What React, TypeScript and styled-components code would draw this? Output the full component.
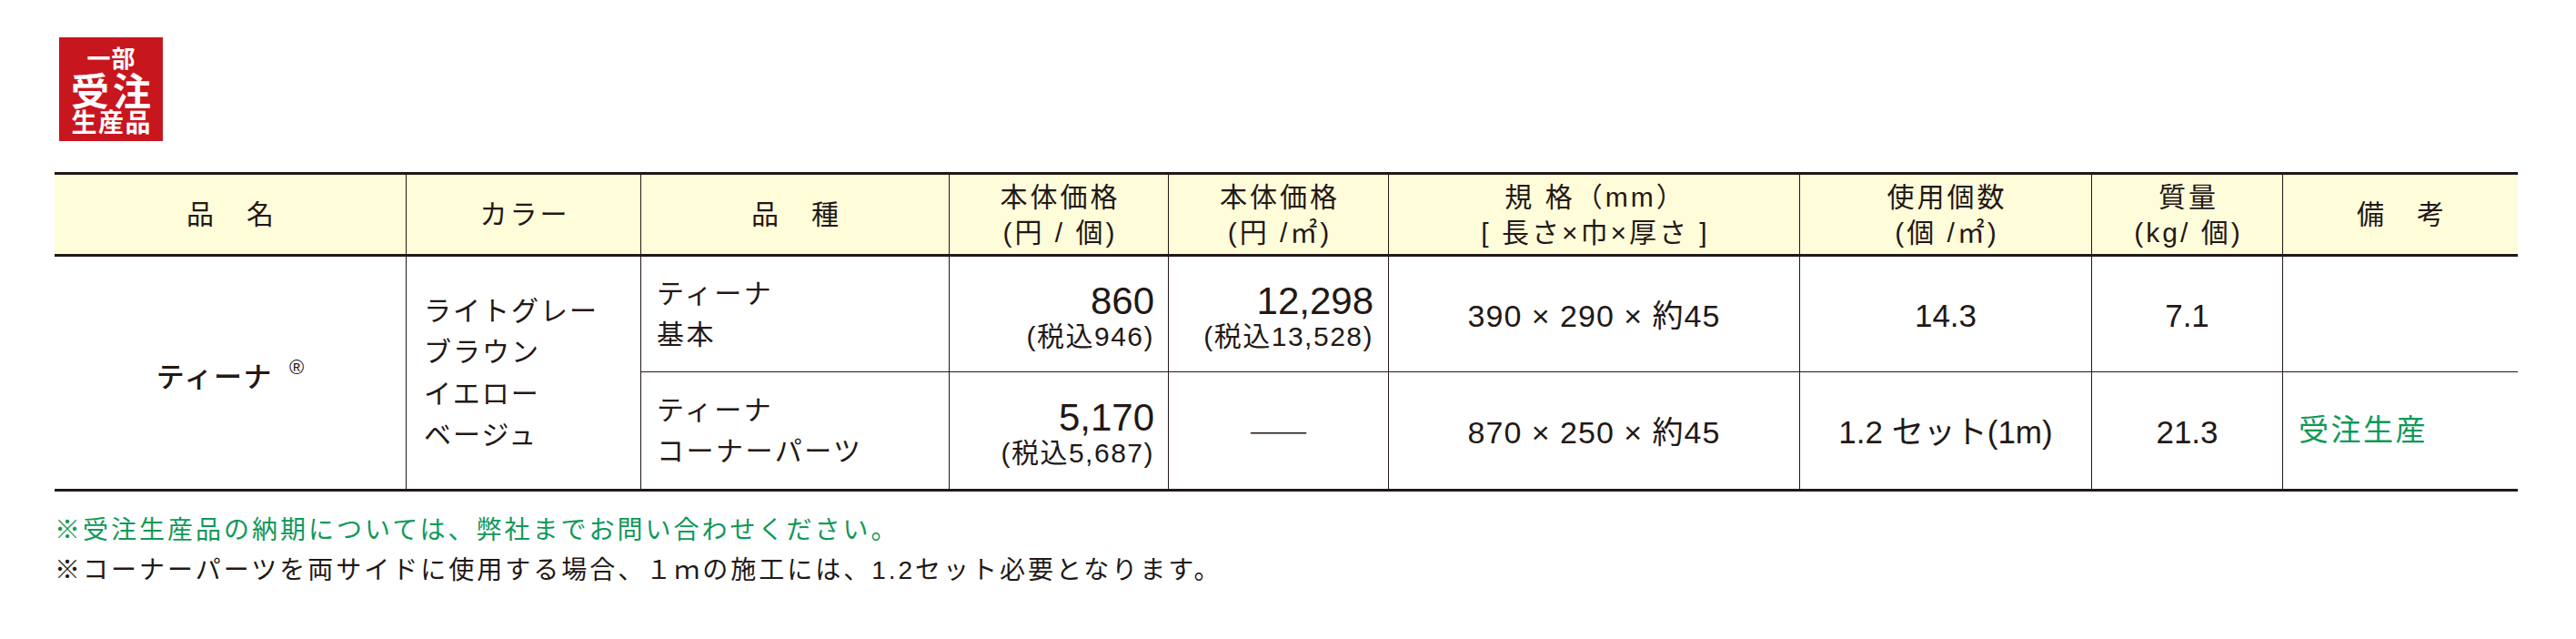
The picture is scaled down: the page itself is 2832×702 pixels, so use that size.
import React from "react";
import styled, { createGlobalStyle } from "styled-components";

const INK = "#231815";
const GREEN = "#109858";

const GlobalStyle = createGlobalStyle`
  html, body {
    margin: 0;
    padding: 0;
    background: #ffffff;
  }
  body {
    font-family: "Liberation Sans", "Noto Sans CJK JP", sans-serif;
    color: ${INK};
  }
`;

const Page = styled.div`
  width: 2832px;
  height: 702px;
  box-sizing: border-box;
  padding: 41px 0 0 60px;
  display: flex;
  flex-direction: column;
  align-items: flex-start;
`;

const Badge = styled.div`
  width: 114px;
  height: 114px;
  margin-left: 5px;
  background: #c8161e;
  color: #ffffff;
  display: flex;
  flex-direction: column;
  align-items: center;
  justify-content: center;
  font-family: "Noto Sans CJK JP", sans-serif;
  font-weight: 700;
`;

const BadgeLine = styled.span<{ $size: number; $lh: number; $ls: number }>`
  display: block;
  font-size: ${(p) => p.$size}px;
  line-height: ${(p) => p.$lh}px;
  letter-spacing: ${(p) => p.$ls}px;
  padding-left: ${(p) => p.$ls}px;
  white-space: nowrap;
`;

const SpecTable = styled.table`
  margin-top: 34px;
  width: 2708px;
  table-layout: fixed;
  border-collapse: separate;
  border-spacing: 0;
`;

const HeadRow = styled.tr`
  height: 93px;
`;

const BodyRow = styled.tr<{ $h: number }>`
  height: ${(p) => p.$h}px;
`;

const Th = styled.th<{ $first?: boolean }>`
  padding: 0 0 0 3px;
  background: #fffcda;
  border-top: 3px solid ${INK};
  border-bottom: 3px solid ${INK};
  border-left: ${(p) => (p.$first ? "none" : `1px solid ${INK}`)};
  font-weight: 400;
  font-size: 30px;
  letter-spacing: 3px;
  line-height: 39px;
  text-align: center;
  vertical-align: middle;
  white-space: nowrap;
`;

const Cell = styled.td<{ $first?: boolean; $thick?: boolean }>`
  padding: 0;
  border-left: ${(p) => (p.$first ? "none" : `1px solid ${INK}`)};
  border-bottom: ${(p) => (p.$thick ? `3px solid ${INK}` : `1px solid ${INK}`)};
  vertical-align: middle;
  white-space: nowrap;
`;

const NameCell = styled(Cell)`
  text-align: center;
  font-size: 31px;
  font-weight: 500;
  letter-spacing: 1.5px;
  line-height: 40px;
`;

const Registered = styled.span`
  font-family: "Liberation Sans", sans-serif;
  font-size: 22px;
  font-weight: 400;
  letter-spacing: 0;
  margin-left: 18px;
  vertical-align: 14px;
`;

const ColorCell = styled(Cell)`
  padding-left: 19px;
  text-align: left;
  font-size: 30px;
  letter-spacing: 2px;
  line-height: 45.5px;
`;

const TypeCell = styled(Cell)`
  padding-left: 17px;
  text-align: left;
  font-size: 30px;
  letter-spacing: 2.5px;
  line-height: 45px;
`;

const PriceCell = styled(Cell)<{ $pr: number }>`
  padding: 10px ${(p) => p.$pr}px 0 0;
  text-align: right;
`;

const PriceMain = styled.span`
  display: block;
  font-size: 42px;
  line-height: 39px;
`;

const PriceTax = styled.span`
  display: block;
  font-size: 30px;
  letter-spacing: 1.5px;
  line-height: 39px;
`;

const Dash = styled.span`
  font-family: "Noto Sans CJK JP", sans-serif;
  font-size: 33px;
  letter-spacing: 0;
`;

const CenterCell = styled(Cell)<{ $size?: number; $ls?: number }>`
  text-align: center;
  font-size: ${(p) => p.$size ?? 35}px;
  letter-spacing: ${(p) => p.$ls ?? 0}px;
  line-height: 40px;
  padding-top: 3px;
`;

const RemarkCell = styled(Cell)`
  padding-left: 17px;
  text-align: left;
  color: ${GREEN};
  font-size: 33px;
  letter-spacing: 2.5px;
  line-height: 40px;
`;

const Notes = styled.div`
  margin-top: 21px;
  display: flex;
  flex-direction: column;
`;

const Note = styled.p<{ $green?: boolean }>`
  margin: 0;
  font-size: 28px;
  letter-spacing: 3px;
  line-height: 44px;
  white-space: nowrap;
  color: ${(p) => (p.$green ? GREEN : INK)};
`;

const Line = styled.span`
  display: block;
`;

const colWidths = [386, 258, 339, 241, 242, 452, 321, 210, 259];

const headers: string[][] = [
  ["品　名"],
  ["カラー"],
  ["品　種"],
  ["本体価格", "(円 / 個)"],
  ["本体価格", "(円 /㎡)"],
  ["規 格（mm）", "[ 長さ×巾×厚さ ]"],
  ["使用個数", "(個 /㎡)"],
  ["質量", "(kg/ 個)"],
  ["備　考"],
];

const colors = ["ライトグレー", "ブラウン", "イエロー", "ベージュ"];

export default function App() {
  return (
    <>
      <GlobalStyle />
      <Page>
        <Badge>
          <BadgeLine $size={26} $lh={28} $ls={1}>
            一部
          </BadgeLine>
          <BadgeLine $size={42} $lh={42} $ls={4}>
            受注
          </BadgeLine>
          <BadgeLine $size={28} $lh={28} $ls={1.5}>
            生産品
          </BadgeLine>
        </Badge>

        <SpecTable>
          <colgroup>
            {colWidths.map((w, i) => (
              <col key={i} style={{ width: w }} />
            ))}
          </colgroup>
          <thead>
            <HeadRow>
              {headers.map((lines, i) => (
                <Th key={i} $first={i === 0}>
                  {lines.map((l, j) => (
                    <Line key={j}>{l}</Line>
                  ))}
                </Th>
              ))}
            </HeadRow>
          </thead>
          <tbody>
            <BodyRow $h={127}>
              <NameCell rowSpan={2} $first $thick>
                ティーナ<Registered>®</Registered>
              </NameCell>
              <ColorCell rowSpan={2} $thick>
                {colors.map((c) => (
                  <Line key={c}>{c}</Line>
                ))}
              </ColorCell>
              <TypeCell>
                <Line>ティーナ</Line>
                <Line>基本</Line>
              </TypeCell>
              <PriceCell $pr={15}>
                <PriceMain>860</PriceMain>
                <PriceTax>(税込946)</PriceTax>
              </PriceCell>
              <PriceCell $pr={16}>
                <PriceMain>12,298</PriceMain>
                <PriceTax>(税込13,528)</PriceTax>
              </PriceCell>
              <CenterCell $size={34} $ls={1}>
                390 × 290 × 約45
              </CenterCell>
              <CenterCell>14.3</CenterCell>
              <CenterCell>7.1</CenterCell>
              <RemarkCell />
            </BodyRow>
            <BodyRow $h={131}>
              <TypeCell $thick>
                <Line>ティーナ</Line>
                <Line>コーナーパーツ</Line>
              </TypeCell>
              <PriceCell $pr={15} $thick>
                <PriceMain>5,170</PriceMain>
                <PriceTax>(税込5,687)</PriceTax>
              </PriceCell>
              <CenterCell $thick>
                <Dash>――</Dash>
              </CenterCell>
              <CenterCell $size={34} $ls={1} $thick>
                870 × 250 × 約45
              </CenterCell>
              <CenterCell $thick>1.2 セット(1m)</CenterCell>
              <CenterCell $thick>21.3</CenterCell>
              <RemarkCell $thick>受注生産</RemarkCell>
            </BodyRow>
          </tbody>
        </SpecTable>

        <Notes>
          <Note $green>※受注生産品の納期については、弊社までお問い合わせください。</Note>
          <Note>※コーナーパーツを両サイドに使用する場合、１ｍの施工には、1.2セット必要となります。</Note>
        </Notes>
      </Page>
    </>
  );
}
